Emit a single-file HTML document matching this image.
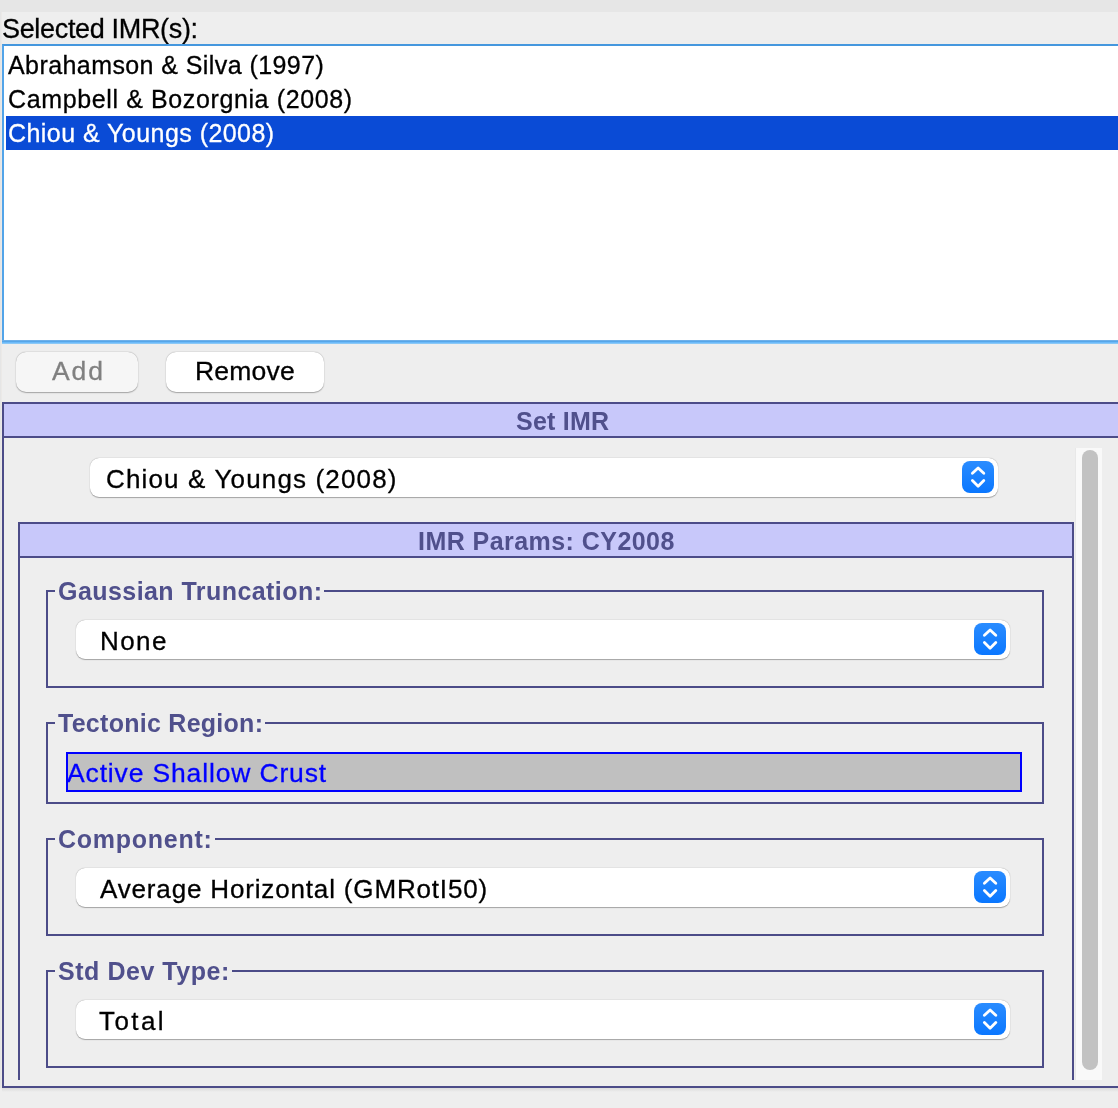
<!DOCTYPE html>
<html><head><meta charset="utf-8">
<style>
html,body{margin:0;padding:0;}
.t,.tbt{will-change:transform;}
body{width:1118px;height:1108px;overflow:hidden;background:#eeeeee;position:relative;font-family:"Liberation Sans",sans-serif;}
.a{position:absolute;}
.t{position:absolute;white-space:pre;color:#000;-webkit-text-stroke:0.3px currentColor;}
.b25{-webkit-text-stroke:0 !important;}
.n25{font-size:25px;line-height:25px;}
.n26{font-size:26px;line-height:26px;}
.b25{font-size:25px;line-height:25px;font-weight:bold;color:#50508c;}
.combo{position:absolute;background:#fff;border-radius:9px;box-shadow:0 0.8px 1px rgba(0,0,0,0.3),0 0 1px rgba(0,0,0,0.16);}
.arr{position:absolute;width:32px;height:32px;border-radius:8px;background:linear-gradient(#2a8cff,#0a77ff);}
.arr svg{position:absolute;left:0;top:0;}
.tb{position:absolute;border:2px solid #4c4c88;}
.tbt{position:absolute;background:#eeeeee;white-space:pre;}
.btn{position:absolute;border-radius:10px;box-shadow:0 0.8px 1.2px rgba(0,0,0,0.3),0 0 1px rgba(0,0,0,0.16);}
</style></head>
<body>
<!-- top strip -->
<div class="a" style="left:0;top:0;width:1118px;height:12px;background:#e6e6e6"></div>
<div class="a" style="left:0;top:12px;width:1px;height:1076px;background:#e5e5e5"></div><div class="a" style="left:1px;top:12px;width:1px;height:1076px;background:#ebe9e7"></div>

<div class="t" style="font-size:27px;line-height:27px;left:2px;top:16px;letter-spacing:-0.33px">Selected IMR(s):</div>

<!-- list -->
<div class="a" style="left:2px;top:44px;width:1130px;height:294px;border-top:2px solid #4597de;border-left:2px solid #52a4e9;background:#fff"></div><div class="a" style="left:2px;top:340px;width:1130px;height:1px;background:#6eb0ea"></div><div class="a" style="left:2px;top:341px;width:1130px;height:1px;background:#56a6e8"></div><div class="a" style="left:2px;top:342px;width:1130px;height:1px;background:#6cbafa"></div><div class="a" style="left:2px;top:343px;width:1130px;height:1px;background:#8ac8f6"></div>
<div class="a" style="left:6px;top:116px;width:1118px;height:34px;background:#0a4bd6"></div>
<div class="t n25" style="left:8px;top:53px;letter-spacing:0.42px">Abrahamson &amp; Silva (1997)</div>
<div class="t n25" style="left:8px;top:87px;letter-spacing:0.62px">Campbell &amp; Bozorgnia (2008)</div>
<div class="t n25" style="left:8px;top:121px;color:#fff;letter-spacing:0.45px">Chiou &amp; Youngs (2008)</div>

<!-- buttons -->
<div class="btn" style="left:16px;top:352px;width:122px;height:40px;background:#f6f6f6"></div>
<div class="t" style="font-size:26.5px;line-height:26.5px;left:52px;top:358px;color:#808080;letter-spacing:1.9px">Add</div>
<div class="btn" style="left:166px;top:352px;width:158px;height:40px;background:#fff"></div>
<div class="t" style="font-size:26.5px;line-height:26.5px;left:195px;top:358px;letter-spacing:0.2px">Remove</div>

<!-- outer panel -->
<div class="a" style="left:2px;top:402px;width:1116px;height:682px;border:2px solid #4c4c88;border-right:none"></div>
<div class="a" style="left:4px;top:404px;width:1114px;height:32px;background:#c8c8fa;border-bottom:2px solid #4c4c88"></div>
<div class="t b25" style="left:516px;top:409px;letter-spacing:0.25px">Set IMR</div>

<!-- set IMR combo -->
<div class="combo" style="left:90px;top:458px;width:908px;height:39px"></div>
<div class="t n26" style="left:106px;top:466px;letter-spacing:1.15px">Chiou &amp; Youngs (2008)</div>
<div class="arr" style="left:962px;top:461px"><svg width="32" height="32"><path d="M10.4 12.3L16.1 6.9L21.8 12.3M10.4 19.5L16.1 25.2L21.8 19.5" stroke="#fff" stroke-width="2.8" fill="none" stroke-linecap="round" stroke-linejoin="round"/></svg></div>

<!-- scrollbar -->
<div class="a" style="left:1075px;top:448px;width:1px;height:632px;background:#e8e8e8"></div>
<div class="a" style="left:1076px;top:448px;width:26px;height:632px;background:#f9f9f9"></div>
<div class="a" style="left:1082px;top:450px;width:16px;height:620px;border-radius:8px;background:#c2c2c2"></div>

<!-- inner panel -->
<div class="a" style="left:18px;top:522px;width:1052px;height:600px;border:2px solid #4c4c88;border-bottom:none;clip-path:inset(0 0 44px 0)"></div>
<div class="a" style="left:20px;top:524px;width:1052px;height:32px;background:#c8c8fa;border-bottom:2px solid #4c4c88"></div>
<div class="t b25" style="left:418px;top:529px;letter-spacing:0.45px">IMR Params: CY2008</div>

<!-- Gaussian -->
<div class="tb" style="left:46px;top:590px;width:994px;height:94px"></div>
<div class="tbt b25" style="left:55px;top:579px;padding:0 2px 0 3px;letter-spacing:0.44px">Gaussian Truncation:</div>
<div class="combo" style="left:76px;top:620px;width:934px;height:39px"></div>
<div class="t n26" style="left:100px;top:628px;letter-spacing:1.4px">None</div>
<div class="arr" style="left:974px;top:623px"><svg width="32" height="32"><path d="M10.4 12.3L16.1 6.9L21.8 12.3M10.4 19.5L16.1 25.2L21.8 19.5" stroke="#fff" stroke-width="2.8" fill="none" stroke-linecap="round" stroke-linejoin="round"/></svg></div>

<!-- Tectonic -->
<div class="tb" style="left:46px;top:722px;width:994px;height:78px"></div>
<div class="tbt b25" style="left:55px;top:711px;padding:0 2px 0 3px;letter-spacing:0.27px">Tectonic Region:</div>
<div class="a" style="left:66px;top:752px;width:952px;height:36px;border:2px solid #0000ff;background:#c0c0c0"></div>
<div class="t" style="font-size:26.5px;line-height:26.5px;left:67px;top:760px;color:#0000ff;letter-spacing:0.85px">Active Shallow Crust</div>

<!-- Component -->
<div class="tb" style="left:46px;top:838px;width:994px;height:94px"></div>
<div class="tbt b25" style="left:55px;top:827px;padding:0 2px 0 3px;letter-spacing:0.74px">Component:</div>
<div class="combo" style="left:76px;top:868px;width:934px;height:39px"></div>
<div class="t n26" style="left:100px;top:876px;letter-spacing:0.84px">Average Horizontal (GMRotI50)</div>
<div class="arr" style="left:974px;top:871px"><svg width="32" height="32"><path d="M10.4 12.3L16.1 6.9L21.8 12.3M10.4 19.5L16.1 25.2L21.8 19.5" stroke="#fff" stroke-width="2.8" fill="none" stroke-linecap="round" stroke-linejoin="round"/></svg></div>

<!-- Std Dev -->
<div class="tb" style="left:46px;top:970px;width:994px;height:94px"></div>
<div class="tbt b25" style="left:55px;top:959px;padding:0 2px 0 3px;letter-spacing:0.54px">Std Dev Type:</div>
<div class="combo" style="left:76px;top:1000px;width:934px;height:39px"></div>
<div class="t n26" style="left:99px;top:1008px;letter-spacing:2.4px">Total</div>
<div class="arr" style="left:974px;top:1003px"><svg width="32" height="32"><path d="M10.4 12.3L16.1 6.9L21.8 12.3M10.4 19.5L16.1 25.2L21.8 19.5" stroke="#fff" stroke-width="2.8" fill="none" stroke-linecap="round" stroke-linejoin="round"/></svg></div>

<!-- bottom shadow line -->
<div class="a" style="left:2px;top:1088px;width:1116px;height:4px;background:linear-gradient(#dcdcdc,#e4e4e4 50%,#eeeeee)"></div>
</body></html>
